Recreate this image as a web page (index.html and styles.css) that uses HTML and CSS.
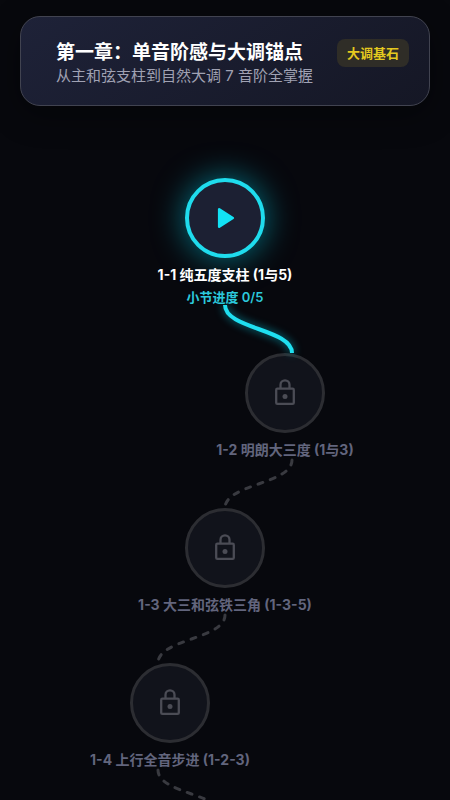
FILE: index.html
```html
<!DOCTYPE html>
<html lang="zh-CN">
<head>
    <meta charset="utf-8" />
    <meta name="viewport" content="width=device-width, initial-scale=1" />
    <meta name="theme-color" content="#07080d" />
    <title>第一章：单音阶感与大调锚点</title>
    <link rel="stylesheet" href="styles.css">
</head>
<body>
    <svg class="icon-defs" aria-hidden="true">
        <symbol id="icon-lock" viewBox="0 0 24 30">
            <path d="M7.5 10.7V6.8a4.5 4.5 0 0 1 9 0v3.9" fill="none" stroke="currentColor" stroke-width="2.3" />
            <rect x="3.2" y="10.7" width="17.6" height="15.2" rx="1.2" fill="none" stroke="currentColor" stroke-width="2.3" />
            <circle cx="12" cy="18.5" r="2.5" fill="currentColor" />
        </symbol>
    </svg>

    <header class="chapter-card">
        <div class="chapter-heading">
            <h1 class="chapter-title">第一章：单音阶感与大调锚点</h1>
            <span class="chapter-badge">大调基石</span>
        </div>
        <p class="chapter-subtitle">从主和弦支柱到自然大调 7 音阶全掌握</p>
    </header>

    <main class="path">
        <section class="stage">
            <button class="node node-active" type="button" aria-labelledby="stage-1">
                <svg class="play-icon" viewBox="0 0 20 24" aria-hidden="true">
                    <path d="M3.2 3.3v17.4L16.8 12z" fill="currentColor" stroke="currentColor" stroke-width="2.6" stroke-linejoin="round" />
                </svg>
            </button>
            <h2 class="stage-label stage-label-active" id="stage-1">1-1 纯五度支柱 (1与5)</h2>
            <p class="stage-progress">小节进度 0/5</p>
        </section>

        <svg class="connector connector-active" viewBox="0 0 140 48" aria-hidden="true">
            <path d="M70 0C70 24 137 24 137 48" />
        </svg>

        <section class="stage stage-right">
            <button class="node" type="button" aria-labelledby="stage-2">
                <svg class="lock-icon" aria-hidden="true"><use href="#icon-lock" /></svg>
            </button>
            <h2 class="stage-label" id="stage-2">1-2 明朗大三度 (1与3)</h2>
        </section>

        <svg class="connector" viewBox="0 0 140 48" aria-hidden="true">
            <path d="M137 0C137 24 70 24 70 48" />
        </svg>

        <section class="stage">
            <button class="node" type="button" aria-labelledby="stage-3">
                <svg class="lock-icon" aria-hidden="true"><use href="#icon-lock" /></svg>
            </button>
            <h2 class="stage-label" id="stage-3">1-3 大三和弦铁三角 (1-3-5)</h2>
        </section>

        <svg class="connector" viewBox="0 0 140 48" aria-hidden="true">
            <path d="M70 0C70 24 3 24 3 48" />
        </svg>

        <section class="stage stage-left">
            <button class="node" type="button" aria-labelledby="stage-4">
                <svg class="lock-icon" aria-hidden="true"><use href="#icon-lock" /></svg>
            </button>
            <h2 class="stage-label" id="stage-4">1-4 上行全音步进 (1-2-3)</h2>
        </section>

        <svg class="connector" viewBox="0 0 140 48" aria-hidden="true">
            <path d="M3 0C3 24 70 24 70 48" />
        </svg>
    </main>
</body>
</html>
```
FILE: styles.css
```css
* {
    margin: 0;
    padding: 0;
    box-sizing: border-box;
}

body {
    font-family: Inter, 'Noto Sans CJK SC', sans-serif;
    background: #07080d;
    height: 100vh;
    overflow: hidden;
    padding: 16px 20px 0;
    color: #ffffff;
}

.icon-defs {
    display: none;
}

/* Chapter header */
.chapter-card {
    padding: 22px 20px 20px 35px;
    background: linear-gradient(145deg, #1e2238 0%, #151725 100%);
    border: 1px solid #414350;
    border-radius: 20px;
    box-shadow: 0 8px 32px rgba(0, 0, 0, 0.4);
}

.chapter-heading {
    display: flex;
    align-items: center;
    justify-content: space-between;
}

.chapter-title {
    font-size: 19px;
    line-height: 28px;
    font-weight: 700;
    white-space: nowrap;
}

.chapter-badge {
    padding: 0 10px;
    font-size: 13px;
    line-height: 28px;
    font-weight: 700;
    white-space: nowrap;
    color: #e5c91f;
    background: #2f2d27;
    border-radius: 8px;
}

.chapter-subtitle {
    font-size: 15px;
    line-height: 18px;
    font-weight: 400;
    color: #a0a2b3;
}

/* Learning path */
.path {
    display: flex;
    flex-direction: column;
    align-items: center;
    padding-top: 72px;
}

.stage {
    display: flex;
    flex-direction: column;
    align-items: center;
}

.stage-right {
    padding-left: 120px;
}

.stage-left {
    padding-right: 110px;
}

.node {
    display: flex;
    align-items: center;
    justify-content: center;
    width: 80px;
    height: 80px;
    color: #4b4c55;
    background: #11131b;
    border: 3px solid #2c2d32;
    border-radius: 50%;
    cursor: pointer;
}

.node-active {
    color: #12e2f5;
    background: #1c2033;
    border: 4px solid #1fdced;
    box-shadow: 0 0 32px rgba(0, 229, 255, 0.5);
}

.play-icon {
    width: 20px;
    height: 24px;
    margin-left: 2px;
}

.lock-icon {
    width: 24px;
    height: 30px;
}

.stage-label {
    margin-top: 7px;
    font-size: 14px;
    line-height: 20px;
    font-weight: 700;
    white-space: nowrap;
    color: #62657d;
}

.stage-label-active {
    color: #ffffff;
}

.stage-progress {
    margin-top: 4px;
    font-size: 13px;
    line-height: 16px;
    font-weight: 600;
    color: #2cc9dc;
}

.connector {
    flex: none;
    width: 140px;
    height: 48px;
    overflow: visible;
    fill: none;
    stroke: #393a40;
    stroke-width: 3;
    stroke-linecap: round;
    stroke-dasharray: 5 8;
}

.connector-active {
    stroke: #1fdff0;
    stroke-width: 4;
    stroke-linecap: butt;
    stroke-dasharray: none;
    filter: drop-shadow(0 0 4px rgba(0, 229, 255, 0.6));
}
```
